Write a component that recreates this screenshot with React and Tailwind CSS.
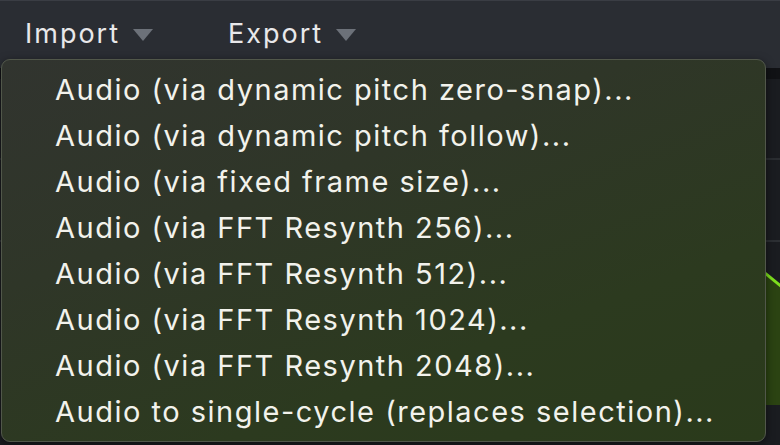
import React from "react";

const items = [
  "Audio (via dynamic pitch zero-snap)...",
  "Audio (via dynamic pitch follow)...",
  "Audio (via fixed frame size)...",
  "Audio (via FFT Resynth 256)...",
  "Audio (via FFT Resynth 512)...",
  "Audio (via FFT Resynth 1024)...",
  "Audio (via FFT Resynth 2048)...",
  "Audio to single-cycle (replaces selection)...",
];

function Caret() {
  return (
    <svg width="20" height="14" viewBox="0 0 20 14" className="ml-[13px] mt-[2px]">
      <polygon points="0,1 20,1 10,13" fill="#6c7179" />
    </svg>
  );
}

export default function App() {
  return (
    <div
      className="relative w-[780px] h-[445px] overflow-hidden bg-[#1a1c20] flex flex-col"
      style={{ fontFamily: "Inter, 'Liberation Sans', sans-serif" }}
    >
      <div className="h-[68px] bg-[#2a2d33] border-t border-[#3a3d44] flex items-start pt-[16px] pl-[25px] text-[27px] leading-[34px] tracking-[2px] text-[#e8e8ea]">
        <div className="flex items-center">
          <span>Import</span>
          <Caret />
        </div>
        <div className="flex items-center ml-[75px]">
          <span>Export</span>
          <Caret />
        </div>
      </div>
      <div className="h-[11px] bg-[#111215]" />
      <div className="flex-1 flex flex-col">
        <div className="h-[81px] border-b-2 border-[#2a2d31]" />
        <div className="h-[82px] border-b-2 border-[#2c2f33]" />
        <div className="flex-1 relative">
          <svg className="absolute inset-0" width="780" height="210" viewBox="0 0 780 210">
            <polygon points="760,28 780,44 780,163 760,163" fill="#2b4312" />
            <line x1="760" y1="27" x2="782" y2="45" stroke="#7ee01e" strokeWidth="3" />
          </svg>
        </div>
      </div>

      <div
        className="absolute left-[1px] top-[59px] w-[765px] h-[383px] rounded-[9px] border border-[#51574a] pt-[7px] pl-[53px] shadow-[0_2px_8px_rgba(0,0,0,0.5)]"
        style={{
          background:
            "linear-gradient(160deg, #31342f 0%, #2f3628 35%, #2c3a1f 70%, #2a3a1b 100%)",
        }}
      >
        {items.map((t) => (
          <div key={t} className="h-[46px] leading-[46px] text-[29px] tracking-[1.5px] text-[#f2f2ec] whitespace-nowrap">
            {t}
          </div>
        ))}
      </div>
    </div>
  );
}
